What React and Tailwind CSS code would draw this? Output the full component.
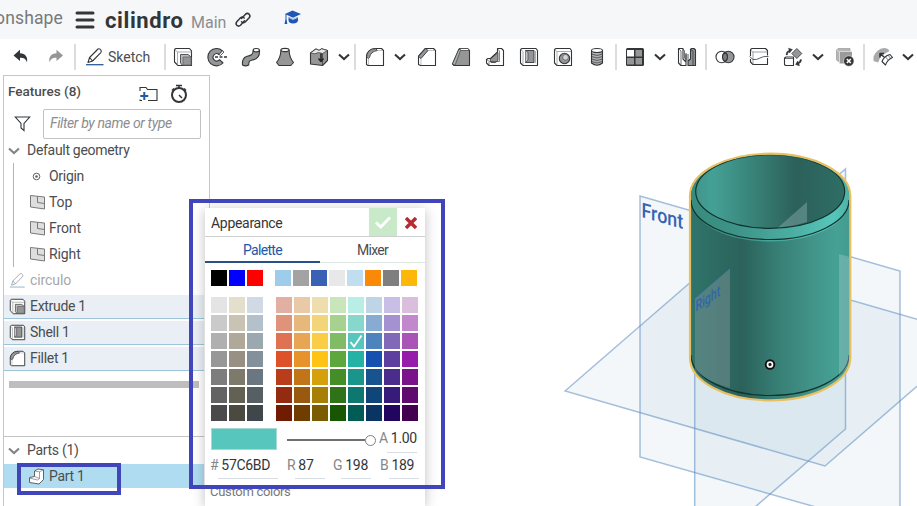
import React from "react";
import { Menu } from "lucide-react";

const D = "#333639";
const G = "#969696";

function Icon({ children, size = 20, className = "" }) {
  return (
    <svg width={size} height={size} viewBox="0 0 20 20" fill="none" stroke={D} strokeWidth="1.1" strokeLinejoin="round" className={"shrink-0 " + className}>
      {children}
    </svg>
  );
}

const Undo = () => (
  <Icon><path d="M2.500 8.500 9 2.800V6.300c5.500 .3 8 3.700 7 9.200C15 12 13 10.800 9 10.800V14Z" fill={D} stroke="none" /></Icon>
);
const Redo = () => (
  <Icon><path d="M17 8.500 10.500 2.800V6.300c-5.500 .3-8 3.700-7 9.200C4.500 12 6.500 10.800 10.500 10.800V14Z" fill={G} stroke="none" /></Icon>
);
const Pencil = ({ size = 20, color = D, line = "#2d5a96" }) => (
  <Icon size={size}>
    <path d="M3 15.500 4.600 10.500 13 2Q14.800 1.200 16 3.200 16.600 4.600 15.800 5.600L7.600 14Z M4.600 10.500 7.600 14" stroke={color} />
    <path d="M1 17.700H18.500" stroke={line} strokeWidth="1.300" />
  </Icon>
);
const Extrude = ({ size = 20 }) => (
  <Icon size={size}>
    <path d="M1.500 2.500 2.800 1.500H16.500L18.500 3.800V18.500H5L1.500 15Z" fill="#fff" />
    <path d="M1.500 2.500 4.500 5V18M4.500 5H18.500" stroke="#888" strokeWidth=".7" />
    <path d="M7.500 7.500H15L18.300 10V18.300H9.500L7.500 16Z" fill="#bbb" strokeWidth=".8" />
    <path d="M10 10H18V18H10Z" fill={G} stroke="#666" strokeWidth=".8" />
  </Icon>
);
const Revolve = () => (
  <Icon>
    <path d="M15.500 3.800A8.700 8.700 0 1 0 16 16L12.500 12.600A3.600 3.600 0 1 1 12 7.500Z" fill={G} />
    <path d="M12 7.500 15.500 3.800 17 5 13.500 8.500Z" fill="#fff" strokeWidth=".8" />
    <path d="M8 10H20" strokeDasharray="3 1.500" strokeWidth="1.300" />
  </Icon>
);
const Sweep = () => (
  <Icon>
    <path d="M1.500 18C1 13 2 10.800 5.500 9.500 10 8.500 12 8 12.200 3.500L18.500 3.200C19 9.500 16 12.500 10.500 13.300 8 13.800 7.800 15 7.700 18Q4.500 19.700 1.500 18Z" fill={G} />
    <ellipse cx="15.300" cy="3.200" rx="3.100" ry="1.700" fill="#fff" />
  </Icon>
);
const Loft = () => (
  <Icon>
    <path d="M6 3Q5.500 11 1.500 15.500L4 18.500H15.800L18.500 15.500Q14.500 11 14 3Z" fill={G} />
    <ellipse cx="10" cy="3" rx="4" ry="1.600" fill="#fff" />
  </Icon>
);
const Thicken = () => (
  <Icon>
    <path d="M1.500 6 7 2Q10.500 4.800 12.500 1.800L18.500 3.500V13.500L13.500 18.500 1.500 17Z" fill={G} />
    <path d="M1.500 6 7 2Q10.500 4.800 12.500 1.800L18.500 3.500 13.500 6.500Q9 4.500 6 6.800Z" fill="#e8e8e8" strokeWidth=".7" />
    <path d="M13.500 6.500V18.500" strokeWidth=".7" />
    <path d="M12 6.500V14M9.500 11.500 12 14.500 14.500 11.500" strokeWidth="1.500" stroke="#222" />
  </Icon>
);
const Fillet = ({ size = 20 }) => (
  <Icon size={size}>
    <path d="M1.500 17.500V9Q3 2 10 1.500H16.500L18.500 3.500V18.500H3Z" fill="#fff" />
    <path d="M1.500 10Q2 2 10.500 1.500L12.500 3.500Q5.500 4.500 4.500 10.500L3.500 11.500Z" fill={G} strokeWidth=".8" />
    <path d="M3.500 11.500V18M12.500 3.500H18" stroke="#999" strokeWidth=".6" />
  </Icon>
);
const Chamfer = () => (
  <Icon>
    <path d="M1.500 17.500V9L8 1.500H16.500L18.500 3.500V18.500H3.500Z" fill="#fff" />
    <path d="M1.500 9.500 8.500 1.500 11 3.500 4 11.500Z" fill={G} strokeWidth=".9" />
    <path d="M4 11.500V18M11 3.500H18" stroke="#999" strokeWidth=".6" />
  </Icon>
);
const Draft = () => (
  <Icon>
    <path d="M1.500 17 8 2 9.500 1.500H16.500L18.500 3.500V18.500H3Z" fill={G} />
    <path d="M1.500 17 8 2 9.500 3.500 4 18.300Z" fill="#b0b0b0" strokeWidth=".6" />
    <path d="M8.500 1.500H16.500L18.500 3.500H10Z" fill="#fff" strokeWidth=".7" />
  </Icon>
);
const Rib = () => (
  <Icon>
    <path d="M1.500 12.500 3 11.500H5.500L12.500 5V1.500H16.500L18.500 3.500V18.500H4L1.500 16Z" fill="#fff" />
    <path d="M5 12.500 13 5.500V13.500L10.500 15.500H6Z" fill={G} strokeWidth=".8" />
    <path d="M12.500 2 14.500 4V14.500H4.500L1.500 12.500M4 15V18.500" strokeWidth=".6" />
  </Icon>
);
const Shell = ({ size = 20 }) => (
  <Icon size={size}>
    <path d="M1.500 2.500 3 1.500H17L18.500 3.500V18.500H4L1.500 16Z" fill="#fff" />
    <path d="M1.500 2.500 4 4.500V18.500M16.500 4V16" stroke="#777" strokeWidth=".6" />
    <path d="M6.500 3.500H15V15.500H6.500Z" fill={G} strokeWidth=".9" />
    <path d="M6.500 3.500 9 5.500V13L6.500 15.500" fill="#c4c4c4" strokeWidth=".6" />
  </Icon>
);
const Hole = () => (
  <Icon>
    <path d="M1.500 2.500 3 1.500H17L18.500 3.500V18.500H4L1.500 16Z" fill="#fff" />
    <path d="M1.500 2.500 4 4.500V18.500M4 4.500H18.500" stroke="#777" strokeWidth=".6" />
    <circle cx="11.500" cy="11.500" r="5.200" fill={G} />
    <circle cx="12.500" cy="10.300" r="2.800" fill="#d5d5d5" strokeWidth=".5" />
  </Icon>
);
const Thread = () => (
  <Icon>
    <path d="M4.500 3.500V16Q10 20.500 15.500 16V3.500" fill="#b0b0b0" />
    <ellipse cx="10" cy="3.500" rx="5.500" ry="2" fill="#fff" />
    <path d="M4.500 7Q10 10 15.500 7M4.500 9.500Q10 12.500 15.500 9.500M4.500 12Q10 15 15.500 12M4.500 14.500Q10 17.500 15.500 14.500" strokeWidth=".7" />
  </Icon>
);
const Pattern = () => (
  <Icon>
    <rect x="1" y="1" width="18" height="18" rx="1.500" fill={D} stroke="none" />
    <path d="M2 3H9V9.500H2Z" fill="#fff" stroke="none" />
    <path d="M10.500 3H17V9.500H10.500ZM2 11H9V17.500H2ZM10.500 11H17V17.500H10.500Z" fill={G} stroke="none" />
  </Icon>
);
const Mirror = () => (
  <Icon>
    <path d="M1.500 1.500H6V12L9 15V6.500L9 18.500H4L1.500 16Z" fill="#fff" />
    <path d="M1.500 1.500 4 4V18.500M6 2 7.500 4V11L9 12.500V7.500" strokeWidth=".7" />
    <path d="M14.500 1.500H17L18.500 3V18.500H11V14L13.500 12V2.500Z" fill={G} />
    <path d="M11 7V14M16 4V18.500M13.500 2.500 16 4" strokeWidth=".8" />
  </Icon>
);
const Boolean = () => (
  <Icon>
    <circle cx="13.300" cy="10" r="5.700" fill={G} />
    <circle cx="6.700" cy="10" r="5.700" />
    <path d="M10 5.300A5.700 5.700 0 0 1 10 14.700 5.700 5.700 0 0 1 10 5.300Z" fill="#7d7d7d" />
  </Icon>
);
const Split = () => (
  <Icon>
    <path d="M1.500 9V2.500L3 1.500H16.500L18.500 3.500V8.500M18.500 11V17.500H4L1.500 15V12" />
    <path d="M1.500 3 4 5H18.500M4 5V17.500" stroke="#777" strokeWidth=".7" />
    <path d="M.500 9.500 4 12.500Q8 13 11 11T19.500 9.500" strokeWidth=".8" />
  </Icon>
);
const Transform = () => (
  <Icon>
    <path d="M1.500 11 3 10H10.500V18.500H2.500L1.500 17.500Z" fill="#fff" />
    <path d="M2 11.500H10" strokeWidth=".7" />
    <path d="M8.800 6.500 13.800 1.500 18.800 6.500 13.800 11.500Z" fill={G} strokeWidth=".8" />
    <path d="M3 8Q3 4 6 3.500L5.500 1 9.500 2.500 6.500 6 6 5Q4.500 5.500 4.500 8ZM18.500 12.500Q18.800 15.500 16 16.500L16.500 19 12.500 17.500 14.500 14 15.500 15.200Q17 14 17 12.500Z" fill={D} strokeWidth=".3" />
  </Icon>
);
const DeletePart = () => (
  <Icon>
    <path d="M1.500 3 3 1.500H15V10L5 15.500 1.500 13Z" fill="#b5b5b5" stroke="#999" strokeWidth=".7" />
    <path d="M4.500 4.500H17V16.500H4.500Z" fill="#9b9b9b" stroke="none" />
    <path d="M2 3 4.500 4.800V16M4.500 4.500H17" stroke="#eee" strokeWidth=".7" />
    <circle cx="13.800" cy="14" r="5.200" fill={D} stroke="#fff" strokeWidth=".5" />
    <path d="M11.800 12 15.800 16M15.800 12 11.800 16" stroke="#fff" strokeWidth="1.600" />
  </Icon>
);
const Surface = () => (
  <Icon>
    <path d="M.5 14V9.500Q4 1.500 11 1 15 1 16.500 4L8 9 5 15.500Z" fill="#aaa" stroke="none" />
    <path d="M9 14.500Q11 9 17 7.500L19.500 10.500Q14.500 12.500 12.500 18Z" fill="#fff" />
    <path d="M15 8.300 17.500 11.200M12.500 9.800 15 13" strokeWidth=".6" />
    <path d="M11 10 7.500 7M7 10.500V6.500H11" strokeWidth="1.600" />
  </Icon>
);

function Chevron({ color = D, className = "" }) {
  return (
    <svg width="12" height="8" viewBox="0 0 12 8" fill="none" stroke={color} strokeWidth="2.100" className={className}>
      <path d="M1 1.500 6 6 11 1.500" />
    </svg>
  );
}
const Tool = ({ children }) => <div className="flex w-[34px] shrink-0 justify-center">{children}</div>;
const Drop = () => <div className="flex w-4 shrink-0 justify-center"><Chevron /></div>;
const Sep = ({ className }) => <div className={"flex shrink-0 justify-center " + className}><div className="h-[26px] w-[2px] bg-[#dcdcdc]" /></div>;

function Header() {
  return (
    <header className="flex h-[39px] shrink-0 items-center bg-[#f5f7f9]">
      <span className="-ml-[5px] w-[72px] shrink-0 pb-[2px] text-[17.500px] tracking-[0.150px] text-[#77797b]">onshape</span>
      <Menu size={24} strokeWidth={3} color={D} className="ml-[6px] shrink-0" />
      <span className="ml-2 w-[86px] pt-[2px] text-[22px] font-bold leading-none tracking-[0.600px] text-[#333639]">cilindro</span>
      <span className="w-[42px] pt-[6px] text-base leading-none text-[#8b8d8f]">Main</span>
      <svg width="20" height="20" viewBox="0 0 20 20" fill="none" stroke={D} strokeWidth="1.500" strokeLinecap="round" className="shrink-0">
        <path d="M8.500 8.500 12.500 4.200Q14.500 2.600 16.200 4.200 17.700 6 16.200 7.800L12.200 12Q10.200 13.500 8.500 11.800" />
        <path d="M11.500 10.800 7.500 15.300Q5.500 17 3.800 15.300 2.300 13.500 3.800 11.700L7.500 7.800Q9.500 6.200 11.200 8" />
      </svg>
      <svg width="18" height="16" viewBox="0 0 18 16" className="ml-[31px] mb-1 shrink-0" fill="#1f57b5">
        <path d="M8.500.5 17 4 9 7.800 1 4Z" />
        <path d="M4.500 6.800 9 9 14 6.800V10.500Q13.500 13.500 9 13.500 5 13.500 4.500 10.500Z" />
        <path d="M1.500 4H2.500V9L3.300 14H.5L1.500 9Z" />
        <path d="M4.500 7.400 9 9.500 14 7.400" fill="none" stroke="#f5f7f9" strokeWidth=".7" />
      </svg>
    </header>
  );
}

function Toolbar() {
  return (
    <div className="flex h-9 shrink-0 items-center bg-white pl-[3px]">
      <div className="flex w-9 shrink-0 justify-center"><Undo /></div>
      <Tool><Redo /></Tool>
      <Sep className="w-[3px]" />
      <div className="flex w-[87px] shrink-0 items-center pl-[9px] text-[14px] text-[#4b4d4f]">
        <Pencil />
        <span className="ml-[3px]">Sketch</span>
      </div>
      <Sep className="w-[3px]" />
      <Tool><Extrude /></Tool><Tool><Revolve /></Tool><Tool><Sweep /></Tool><Tool><Loft /></Tool><Tool><Thicken /></Tool><Drop />
      <Sep className="w-[6px]" />
      <Tool><Fillet /></Tool><Drop />
      <div className="w-[2px] shrink-0" />
      <Tool><Chamfer /></Tool><Tool><Draft /></Tool><Tool><Rib /></Tool><Tool><Shell /></Tool><Tool><Hole /></Tool><Tool><Thread /></Tool>
      <Sep className="w-1" />
      <Tool><Pattern /></Tool><Drop />
      <div className="w-[2px] shrink-0" />
      <Tool><Mirror /></Tool>
      <Sep className="w-1" />
      <Tool><Boolean /></Tool><Tool><Split /></Tool><Tool><Transform /></Tool><Drop />
      <div className="w-[2px] shrink-0" />
      <Tool><DeletePart /></Tool>
      <Sep className="w-1" />
      <Tool><Surface /></Tool><Drop />
    </div>
  );
}

const PlaneIcon = () => (
  <svg width="15" height="16" viewBox="0 0 15 16" fill="#dedede" stroke="#77797b" strokeWidth="1">
    <path d="M.5 1.500 14.500 3V15L.5 13Z" />
    <path d="M7.500 2.300V8.500L14.500 9.500" fill="none" />
  </svg>
);

function FeatureRow({ icon, name }) {
  return (
    <div className="mb-[2px] flex h-6 w-[200px] items-center border-b border-[#9cc5d9] bg-[#e9eff4] pl-[5px]">
      {icon}
      <span className="ml-1">{name}</span>
    </div>
  );
}

function FeaturePanel() {
  return (
    <aside className="ml-[3px] flex w-[207px] shrink-0 flex-col border-x border-t border-[#c6c6c6] bg-white text-[14px] tracking-[-0.300px] text-[#4b4d4f]">
      <div className="flex h-[31px] shrink-0 items-center pl-1">
        <span className="w-[131px] text-[13.500px] font-medium tracking-normal">Features (8)</span>
        <svg width="19" height="16" viewBox="0 0 19 16" fill="none" stroke={D} strokeWidth="1.100" className="mt-1">
          <path d="M1 5V1.500H7L8.500 3.500H18V14.500H9M1 13.500V14.500H3" />
          <path d="M5.300 6V14M1.300 10H9.300" stroke="#2459a5" strokeWidth="2" />
        </svg>
        <svg width="20" height="20" viewBox="0 0 20 20" fill="none" stroke={D} strokeWidth="2" className="ml-[11px] mt-1">
          <circle cx="10" cy="11" r="7" />
          <path d="M7 1.500H13M10 2V4M15 4.500 17 6.500M3 6.500 5 4.500" strokeWidth="1.600" />
          <path d="M10 11 13 14" strokeWidth="1.500" />
        </svg>
      </div>
      <div className="flex h-[31px] shrink-0 items-center pl-[10px] pt-[2px]">
        <svg width="17" height="16" viewBox="0 0 16 16" fill="none" stroke={D} strokeWidth="1.100">
          <path d="M.800 1H15.200L9.500 7.500V14.500L6.500 12V7.500Z" />
        </svg>
        <div className="ml-3 flex h-[30px] w-[158px] items-center rounded-[2px] border border-[#c2c2c2] pl-[6px] italic tracking-[-0.380px] text-[#8b8d8f]">Filter by name or type</div>
      </div>
      <div className="flex h-[25px] shrink-0 items-center pl-1">
        <Chevron color="#808284" />
        <span className="ml-[7px]">Default geometry</span>
      </div>
      <div className="ml-[9px] h-[104px] shrink-0 border-l border-[#b4b4b4] pl-4">
        <div className="flex h-[26px] items-center">
          <svg width="15" height="9" viewBox="0 0 15 9" fill="none" stroke="#606264"><circle cx="6.500" cy="4.500" r="3.300" /><circle cx="6.500" cy="4.500" r="1.300" fill="#606264" stroke="none" /></svg>
          <span className="ml-1">Origin</span>
        </div>
        {["Top", "Front", "Right"].map((n) => (
          <div key={n} className="flex h-[26px] items-center"><PlaneIcon /><span className="ml-1 tracking-[-0.100px]">{n}</span></div>
        ))}
      </div>
      <div className="flex h-7 shrink-0 items-center pb-[2px] pl-[5px] text-[#a5a7a9]">
        <div className="flex w-[21px]"><Pencil size={17} color="#a5a7a9" line="#a5bccd" /></div>
        <span className="tracking-[-0.100px]">circulo</span>
      </div>
      <FeatureRow icon={<Extrude size={17} />} name="Extrude 1" />
      <FeatureRow icon={<Shell size={17} />} name="Shell 1" />
      <FeatureRow icon={<Fillet size={17} />} name="Fillet 1" />
      <div className="ml-[5px] mt-2 h-[7px] w-[190px] shrink-0 bg-[#bebebe]" />
      <div className="mt-12 flex h-7 w-[200px] shrink-0 items-center border-t border-[#c4c4c4] pl-1">
        <Chevron color="#808284" />
        <span className="ml-[7px]">Parts (1)</span>
      </div>
      <div className="flex h-6 w-[200px] shrink-0 items-center bg-[#b0dcf2] pl-6">
        <svg width="17" height="17" viewBox="0 0 17 17" fill="#fff" stroke="#606264" strokeWidth="1">
          <path d="M1.500 9.500 6.500 8.500V3L10 1 15.500 1.800V11.500L11 16 1.500 14.500Z" />
          <path d="M6.500 3 11.500 3.800V10.500L9.500 12 1.500 10M11.500 3.800 15.500 1.800M11.500 10.500 6.500 8.500" fill="none" strokeWidth=".6" />
        </svg>
        <span className="ml-1">Part 1</span>
      </div>
    </aside>
  );
}

function Viewport() {
  const plane = { fill: "#4b86b8", fillOpacity: 0.065, stroke: "#5d8cc0", strokeOpacity: 0.55, strokeWidth: 1.5 };
  return (
    <svg width="707" height="431" viewBox="210 75 707 431" className="shrink-0">
      <defs>
        <linearGradient id="body" x1="690" x2="850" y1="0" y2="0" gradientUnits="userSpaceOnUse">
          <stop offset="0" stopColor="#2f756b" /><stop offset=".18" stopColor="#2d6a62" /><stop offset=".33" stopColor="#2b625b" />
          <stop offset=".55" stopColor="#377f75" /><stop offset=".75" stopColor="#419287" /><stop offset=".92" stopColor="#46a195" /><stop offset="1" stopColor="#439b8f" />
        </linearGradient>
        <linearGradient id="inner" x1="695" x2="845" y1="0" y2="0" gradientUnits="userSpaceOnUse">
          <stop offset="0" stopColor="#42958a" /><stop offset=".12" stopColor="#44a095" /><stop offset=".4" stopColor="#388177" />
          <stop offset=".67" stopColor="#2c605a" /><stop offset="1" stopColor="#2e6e65" />
        </linearGradient>
        <linearGradient id="rim" x1="690" x2="850" y1="0" y2="0" gradientUnits="userSpaceOnUse">
          <stop offset="0" stopColor="#368a7e" /><stop offset=".3" stopColor="#3e9488" /><stop offset=".65" stopColor="#4cafa3" /><stop offset=".9" stopColor="#57c6ba" /><stop offset="1" stopColor="#4cb0a4" />
        </linearGradient>
        <clipPath id="part"><path d="M691 196A79 41 0 0 1 849 196V358A79 41 0 0 1 691 358Z" /></clipPath>
      </defs>
      <path d="M565 391 715 261 975 336 825 466Z" {...plane} />
      <path d="M640 196 900 271V531L640 457Z" {...plane} />
      <path d="M694.700 299 845.500 169V429L694.700 559Z" {...plane} />
      <text transform="matrix(.87 .25 0 1 641.500 217)" fontSize="20.500" fontWeight="500" fill="#3563b4">Front</text>

      <path d="M690 196A80 42.300 0 0 1 850.300 196V358A80 42.300 0 0 1 690 358Z" fill="url(#body)" stroke="#e9c061" strokeWidth="2.200" />
      <g clipPath="url(#part)">
        <path d="M691 150H849V201A79 40.500 0 0 1 691 201Z" fill="url(#rim)" />
        <path d="M691 200A79 39.500 0 0 0 849 200" fill="none" stroke="#12332f" strokeWidth="1.200" />
        <ellipse cx="770.200" cy="191.500" rx="74.500" ry="36.800" fill="url(#inner)" stroke="#12332f" strokeWidth="1.200" />
        <path d="M778 227.500 807 202V222Q795 226 778 227.500Z" fill="#8ab0ae" fillOpacity=".45" />
        <path d="M691 355A79 40.500 0 0 0 849 355" fill="none" stroke="#12332f" strokeWidth="1.200" />
        <path d="M695 299 730 269V388Q708 382 695 370Z" fill="#9aa4ac" fillOpacity=".36" />
        <path d="M839 254 850 257V366L839 375Z" fill="#b4d2dc" fillOpacity=".32" />
        <path d="M695 299 730 269" stroke="#4b7eaa" strokeWidth="1" />
      </g>
      <text transform="matrix(.68 -.46 0 1 695.500 312)" fontSize="15.500" fontWeight="500" fill="#2f66ac">Right</text>
      <circle cx="770" cy="364.500" r="5.200" fill="#111" />
      <circle cx="770" cy="364.500" r="2.500" fill="#222" stroke="#fff" strokeWidth="1.700" />
    </svg>
  );
}

const recent = [["#000000", "#0000ff", "#ff0000"], ["#9dcdea", "#a3a3a3", "#3a62b4", "#e8e8e8", "#c1def1", "#fa8a05", "#7f7f7f", "#fcb708"]];
const grays = [
  "#e4e4e4", "#e4dfcc", "#cfdae4", "#cacaca", "#c8c3b2", "#b5c1ca", "#b0b0b0", "#b0a99a", "#9ca8b0",
  "#979797", "#989082", "#84919a", "#7d7d7d", "#7d7a6c", "#6b7780", "#636363", "#626154", "#566064", "#4a4a4a", "#4a4a41", "#40474b",
];
const hues = [
  "#e2b0a2", "#e8cba6", "#efdead", "#c9e6ba", "#b9eee5", "#bed5e8", "#c9bfe6", "#d9bfdd",
  "#df937b", "#e7b87c", "#f4d478", "#a6d18f", "#86d8cd", "#88abd4", "#a492d0", "#c288cd",
  "#de7252", "#e8a553", "#fbcd46", "#82bb66", "#57c6bd", "#4e84bd", "#8168b8", "#aa54b8",
  "#dd5229", "#e7922b", "#fec315", "#5ea73c", "#24b2a5", "#1650b0", "#5d3fa0", "#961daa",
  "#b93d1a", "#c17518", "#d4a00b", "#458e27", "#19958a", "#17538f", "#4a2c8d", "#7b148b",
  "#942b10", "#99590f", "#a77f04", "#2f7217", "#0c786f", "#104579", "#361b7b", "#5f0a6e",
  "#711b02", "#6f3d00", "#7a5d00", "#195601", "#005c54", "#0a3562", "#22055f", "#440050",
];
const Swatch = ({ color, picked }) => (
  <div className="flex size-4 items-center justify-center" style={{ backgroundColor: color }}>
    {picked && <svg width="16" height="16" viewBox="0 0 16 16" fill="none" stroke="#fff" strokeWidth="1.800"><path d="M2.500 9 6 13.500 13.500 2.500" /></svg>}
  </div>
);
const Channel = ({ label, value, className }) => (
  <div className={"flex items-center " + className}>
    <span className="text-[#858789]">{label}</span>
    <span className="ml-[3px] text-[#333639]">{value}</span>
  </div>
);

function AppearanceDialog() {
  return (
    <div className="absolute left-[205px] top-[208px] flex h-[298px] w-[220px] flex-col bg-white text-[14px] tracking-[-0.300px] text-[#4b4d4f] shadow-[0_2px_12px_rgba(0,0,0,0.25)]">
      <div className="flex h-[29px] shrink-0 border-b border-[#cfcfcf]">
        <span className="w-[164px] pl-[6px] leading-[30px] text-[#333639]">Appearance</span>
        <div className="flex w-7 items-center justify-center bg-[#c9eac9]">
          <svg width="16" height="13" viewBox="0 0 16 13" fill="none" stroke="#fff" strokeWidth="2.800"><path d="M1 6.500 5.700 11 15 1.500" /></svg>
        </div>
        <div className="flex w-7 items-center justify-center pt-[2px]">
          <svg width="12" height="12" viewBox="0 0 12 12" stroke="#b72a30" strokeWidth="3.400"><path d="M1 1 11 11M11 1 1 11" /></svg>
        </div>
      </div>
      <div className="flex h-[26px] shrink-0 text-center leading-[26px] tracking-[-0.700px]">
        <div className="h-[26px] w-[115px] border-b-2 border-[#265086] text-[#2457a8]">Palette</div>
        <div className="h-[26px] w-[105px] border-b border-[#dfe9e3]">Mixer</div>
      </div>
      <div className="flex shrink-0 gap-3 pl-[6px] pt-[7px]">
        {recent.map((group, i) => (
          <div key={i} className="flex gap-[2px]">{group.map((c) => <Swatch key={c} color={c} />)}</div>
        ))}
      </div>
      <div className="flex shrink-0 gap-[13px] pl-[6px] pt-[11px]">
        <div className="grid grid-cols-3 gap-[2px]">{grays.map((c, i) => <Swatch key={i} color={c} />)}</div>
        <div className="grid grid-cols-8 gap-[2px]">{hues.map((c, i) => <Swatch key={i} color={c} picked={i === 20} />)}</div>
      </div>
      <div className="mt-[7px] flex h-6 shrink-0 pl-[6px]">
        <div className="h-[22px] w-[66px] border border-[#a9d9d3] bg-[#57c6bd]" />
        <div className="ml-[10px] mt-[6px] flex h-3 w-[89px] items-center">
          <div className="h-[2px] w-[78px] bg-[#707070]" />
          <div className="size-[11px] shrink-0 rounded-full border-[1.500px] border-[#808080] bg-white" />
        </div>
        <Channel label="A" value="1.00" className="ml-[3px] h-5" />
      </div>
      <div className="flex h-px shrink-0 pl-[182px]"><div className="w-[30px] bg-[#d8dce4]" /></div>
      <div className="mt-[3px] flex h-[19px] shrink-0 pl-[5px]">
        <Channel label="#" value="57C6BD" className="w-[77px]" />
        <Channel label="R" value="87" className="w-[46px]" />
        <Channel label="G" value="198" className="w-[47px]" />
        <Channel label="B" value="189" />
      </div>
      <div className="mt-[3px] flex h-px shrink-0 pl-[13px]">
        <div className="w-[60px] bg-[#d8dce4]" /><div className="ml-[17px] w-[30px] bg-[#d8dce4]" /><div className="ml-4 w-[30px] bg-[#d8dce4]" /><div className="ml-[18px] w-[30px] bg-[#d8dce4]" />
      </div>
      <span className="mt-[5px] pl-[5px] text-[13px] leading-4 text-[#77797b]">Custom colors</span>
    </div>
  );
}

export default function App() {
  return (
    <div className="relative flex h-[506px] w-[917px] flex-col overflow-hidden bg-white font-['Roboto',sans-serif]">
      <Header />
      <Toolbar />
      <main className="flex h-[431px] shrink-0">
        <FeaturePanel />
        <Viewport />
      </main>
      <AppearanceDialog />
      <div className="absolute left-[189px] top-[199px] h-[290px] w-64 border-4 border-[#4046ba]" />
      <div className="absolute left-[17px] top-[463px] h-8 w-[104px] border-4 border-[#4046ba]" />
    </div>
  );
}
